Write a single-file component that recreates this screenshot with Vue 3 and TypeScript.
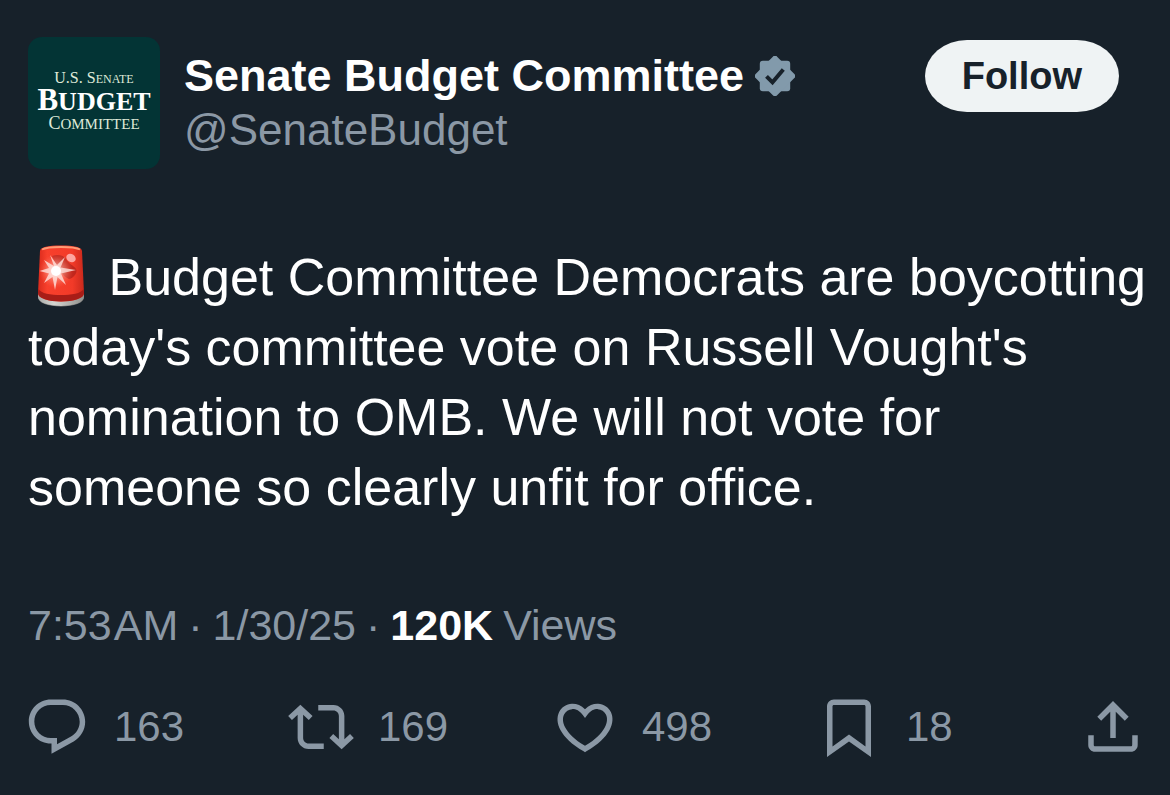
<script setup lang="ts">
interface Action {
  name: string
  count?: number
  path: string
}

const actions: Action[] = [
  {
    name: 'Reply',
    count: 163,
    path: 'M1.751 10c0-4.42 3.584-8 8.005-8h4.366c4.49 0 8.129 3.64 8.129 8.13 0 2.96-1.607 5.68-4.196 7.11l-8.054 4.46v-3.69h-.067c-4.49.1-8.183-3.51-8.183-8.01zm8.005-6c-3.317 0-6.005 2.69-6.005 6 0 3.37 2.77 6.08 6.138 6.01l.351-.01h1.761v2.3l5.087-2.81c1.951-1.08 3.163-3.13 3.163-5.36 0-3.39-2.744-6.13-6.129-6.13H9.756z',
  },
  {
    name: 'Repost',
    count: 169,
    path: 'M4.5 3.88l4.432 4.14-1.364 1.46L5.5 7.55V16c0 1.1.896 2 2 2H13v2H7.5c-2.209 0-4-1.79-4-4V7.55L1.432 9.48.068 8.02 4.5 3.88zM16.5 6H11V4h5.5c2.209 0 4 1.79 4 4v8.45l2.068-1.93 1.364 1.46-4.432 4.14-4.432-4.14 1.364-1.46 2.068 1.93V8c0-1.1-.896-2-2-2z',
  },
  {
    name: 'Like',
    count: 498,
    path: 'M16.697 5.5c-1.222-.06-2.679.51-3.89 2.16l-.805 1.09-.806-1.09C9.984 6.01 8.526 5.44 7.304 5.5c-1.243.07-2.349.78-2.91 1.91-.552 1.12-.633 2.78.479 4.82 1.074 1.97 3.257 4.27 7.129 6.61 3.87-2.34 6.052-4.64 7.126-6.61 1.111-2.04 1.03-3.7.477-4.82-.561-1.13-1.666-1.84-2.908-1.91zm4.187 7.69c-1.351 2.48-4.001 5.12-8.379 7.67l-.503.3-.504-.3c-4.379-2.55-7.029-5.19-8.382-7.67-1.36-2.5-1.41-4.86-.514-6.67.887-1.79 2.647-2.91 4.601-3.01 1.651-.09 3.368.56 4.798 2.01 1.429-1.45 3.146-2.1 4.796-2.01 1.954.1 3.714 1.22 4.601 3.01.896 1.81.846 4.17-.514 6.67z',
  },
  {
    name: 'Bookmark',
    count: 18,
    path: 'M4 4.5C4 3.12 5.119 2 6.5 2h11C18.881 2 20 3.12 20 4.5v18.44l-8-5.71-8 5.71V4.5zM6.5 4c-.276 0-.5.22-.5.5v14.56l6-4.29 6 4.29V4.5c0-.28-.224-.5-.5-.5h-11z',
  },
  {
    name: 'Share',
    path: 'M12 2.59l5.7 5.7-1.41 1.42L13 6.41V16h-2V6.41l-3.3 3.3-1.41-1.42L12 2.59zM21 15l-.02 3.51c0 1.38-1.12 2.49-2.5 2.49H5.5C4.11 21 3 19.88 3 18.5V15h2v3.5c0 .28.22.5.5.5h12.98c.28 0 .5-.22.5-.5L19 15h2z',
  },
]
</script>

<template>
  <article class="post">
    <header class="head">
      <div class="avatar">
        <span class="line small">U.S. S<span class="caps">enate</span></span>
        <span class="line large">B<span class="caps">udget</span></span>
        <span class="line medium">C<span class="caps">ommittee</span></span>
      </div>
      <div class="author">
        <div class="name-row">
          <span class="name">Senate Budget Committee</span>
          <svg class="badge" viewBox="0 0 40 40" role="img" aria-label="Verified account">
            <g fill="#829aab">
              <rect x="4.8" y="4.8" width="30.4" height="30.4" rx="3" />
              <rect x="4.8" y="4.8" width="30.4" height="30.4" rx="3" transform="rotate(45 20 20)" />
            </g>
            <path d="M11.5 20.3l6 6L28.3 13.5" fill="none" stroke="#17212a" stroke-width="4" />
          </svg>
        </div>
        <span class="handle">@SenateBudget</span>
      </div>
      <button class="follow" type="button">Follow</button>
    </header>

    <p class="body">
      <svg class="siren" viewBox="0 0 66 64" role="img" aria-label="Police car light">
        <defs>
          <linearGradient id="glass" x1="0" x2="1" y1="0" y2="0">
            <stop offset="0" stop-color="#d92a1c" />
            <stop offset="0.2" stop-color="#f8402c" />
            <stop offset="0.75" stop-color="#f23a28" />
            <stop offset="1" stop-color="#c9291c" />
          </linearGradient>
          <linearGradient id="base" x1="0" x2="1" y1="0" y2="0">
            <stop offset="0" stop-color="#a9aaa8" />
            <stop offset="0.35" stop-color="#d5d5d1" />
            <stop offset="1" stop-color="#8f8f8c" />
          </linearGradient>
          <radialGradient id="glow">
            <stop offset="0" stop-color="#ffffff" />
            <stop offset="0.3" stop-color="#ffc8bd" stop-opacity="0.8" />
            <stop offset="1" stop-color="#ff7560" stop-opacity="0" />
          </radialGradient>
        </defs>
        <path d="M10 49c0 8 10 12.500 23 12.500S56 57 56 49v4c0 6-10 9.500-23 9.500S10 59 10 53z" fill="#777" />
        <path d="M10 48h46v4.500c0 6-10.500 9.500-23 9.500s-23-3.500-23-9.500z" fill="url(#base)" />
        <path d="M12 7c.5-4 8-5.500 21-5.500S53.500 3 54 7l2 42c0 5.500-10.500 8.500-23 8.500S10 54.500 10 49z" fill="url(#glass)" />
        <path d="M10.300 45c3 4.500 12 6 22.700 6s20-1.500 22.700-6l.3 4c0 5.500-10.500 8.500-23 8.500S10 54.500 10 49z" fill="#a81d17" />
        <path d="M14 5.500c6-3.500 32-3.500 38 0" fill="none" stroke="#ff9a74" stroke-width="2" />
        <path d="M24 12c5-2 12-1 14 3s8 7 10 10-2 9-7 10c-6-2-13-13-17-23z" fill="#a91f18" opacity="0.65" />
        <ellipse cx="43" cy="14" rx="5" ry="4" fill="#ffb9b5" opacity="0.85" transform="rotate(35 43 14)" />
        <circle cx="28" cy="27" r="17" fill="url(#glow)" opacity="0.8" />
        <path d="M26 22l-4-11 7 10 8-8-4.500 10.500L48 26l-15 3.500L38 41l-8.500-8L27 46l-2.500-13L16 39l5-9.500L11.500 27l9.500-3-5-8z" fill="#ffe4de" opacity="0.8" />
        <circle cx="28" cy="27" r="5" fill="#fff" />
      </svg>
      Budget Committee Democrats are boycotting today's committee vote on Russell Vought's
      nomination to OMB. We will not vote for someone so clearly unfit for office.
    </p>

    <div class="meta">
      <time class="time"><span>7:53</span><span>AM</span></time>
      <span>·</span>
      <span>1/30/25</span>
      <span>·</span>
      <strong>120K</strong>
      <span>Views</span>
    </div>

    <div class="actions">
      <button v-for="action in actions" :key="action.name" class="action" type="button" :aria-label="action.name">
        <svg class="icon" viewBox="0 0 24 24" aria-hidden="true"><path :d="action.path" /></svg>
        <span v-if="action.count">{{ action.count }}</span>
      </button>
    </div>
  </article>
</template>

<style>
body {
  margin: 0;
  background: #17212a;
}
</style>

<style scoped>
.post {
  box-sizing: border-box;
  min-height: 100vh;
  padding: 37px 24px 32px 28px;
  background: #17212a;
  color: #fff;
  font-family: "Liberation Sans", Arial, sans-serif;
}

.head {
  display: flex;
  align-items: flex-start;
}

.avatar {
  display: flex;
  flex-direction: column;
  align-items: center;
  justify-content: center;
  box-sizing: border-box;
  flex: none;
  width: 132px;
  height: 132px;
  padding-bottom: 6px;
  border-radius: 14px;
  background: #033435;
  color: #dfe9d8;
  font-family: "Liberation Serif", "Times New Roman", serif;
}

.line {
  white-space: nowrap;
}

.caps {
  line-height: 1;
  text-transform: uppercase;
}

.small {
  font-size: 16px;
  line-height: 18px;
}

.small .caps {
  font-size: 12px;
}

.large {
  color: #fff;
  font-size: 31px;
  font-weight: 700;
  line-height: 26px;
}

.large .caps {
  font-size: 26px;
}

.medium {
  font-size: 18px;
  line-height: 16px;
}

.medium .caps {
  font-size: 15px;
}

.author {
  display: flex;
  flex: 1;
  flex-direction: column;
  min-width: 0;
  padding: 12px 0 0 24px;
  line-height: 54px;
}

.name-row {
  display: flex;
  align-items: center;
  gap: 11px;
  white-space: nowrap;
}

.name {
  font-size: 45px;
  font-weight: 700;
}

.badge {
  flex: none;
  width: 40px;
  height: 40px;
}

.handle {
  color: #8b98a5;
  font-size: 44px;
}

.follow {
  flex: none;
  height: 72px;
  margin: 3px 27px 0 0;
  padding: 0 37px;
  border: 0;
  border-radius: 42px / 36px;
  background: #eff3f4;
  color: #17212a;
  font: 700 38px/72px "Liberation Sans", Arial, sans-serif;
}

.body {
  margin: 73px -8px 0 0;
  font-size: 52px;
  line-height: 70px;
}

.siren {
  width: 66px;
  height: 64px;
  vertical-align: -13px;
}

.meta {
  display: flex;
  gap: 10px;
  margin-top: 77px;
  color: #8b98a5;
  font-size: 43px;
  line-height: 52px;
  white-space: nowrap;
}

.time {
  display: flex;
  gap: 2px;
}

.meta strong {
  color: #fff;
}

.actions {
  display: grid;
  grid-template-columns: repeat(4, 1fr) auto;
  margin: 43px 0 0 -4px;
}

.action {
  display: flex;
  align-items: center;
  gap: 24px;
  padding: 0;
  border: 0;
  background: none;
  color: #8b98a5;
  font: 42px/66px "Liberation Sans", Arial, sans-serif;
}

.icon {
  flex: none;
  width: 66px;
  height: 66px;
  fill: currentColor;
}
</style>
